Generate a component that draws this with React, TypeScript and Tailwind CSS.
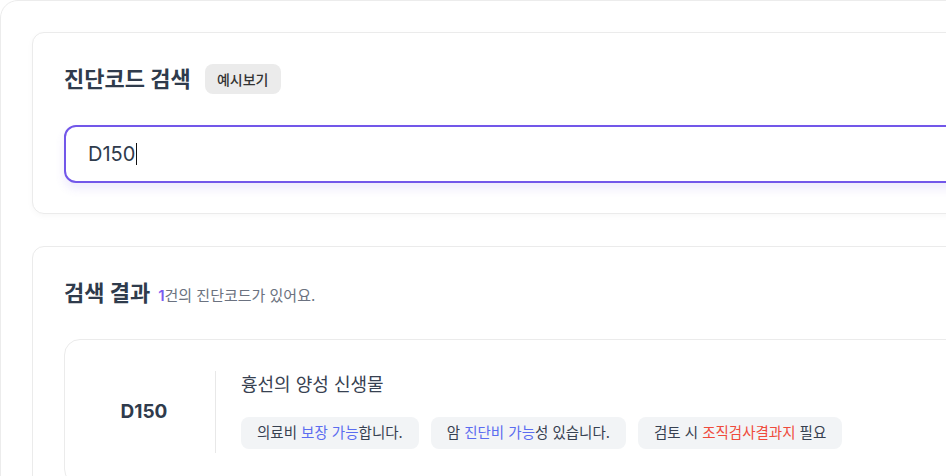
import React from 'react'

const font = { fontFamily: 'Inter, "Noto Sans CJK KR", "Noto Sans", sans-serif' }

function Chip({ children }: { children: React.ReactNode }) {
  return (
    <span className="inline-block h-8 rounded-lg bg-[#f2f4f6] px-4 text-[14.5px] leading-8 text-[#374151] whitespace-nowrap">
      {children}
    </span>
  )
}

export default function App() {
  return (
    <div className="h-[476px] w-[946px] overflow-hidden bg-white" style={font}>
      <div className="w-[1200px] min-h-[600px] rounded-[18px] border border-[#ececec] bg-white p-[31px]">
        {/* Search card */}
        <section className="rounded-xl border border-[#ebebeb] bg-white px-[31px] pt-[31px] pb-[30px] shadow-[0_2px_6px_rgba(0,0,0,0.03)]">
          <div className="flex h-[30px] items-center gap-[14px]">
            <h1 className="text-[22px] leading-[30px] font-bold text-[#2f3b4c]">진단코드 검색</h1>
            <button className="h-[30px] w-[76px] rounded-lg bg-[#ebebeb] text-[14px] font-medium text-[#333]">
              예시보기
            </button>
          </div>
          <div className="mt-[31px] flex h-[58px] items-center rounded-xl border-2 border-[#7257e9] bg-white px-[22px] shadow-[0_6px_10px_rgba(114,87,233,0.12)]">
            <span className="text-[20px] text-[#2f3b4c]">D150</span>
            <span className="ml-px h-[22px] w-px bg-[#111]" />
          </div>
        </section>

        {/* Results card */}
        <section className="mt-8 rounded-xl border border-[#ebebeb] bg-white p-[31px]">
          <div className="flex h-[30px] items-baseline gap-2">
            <h2 className="text-[22px] leading-[30px] font-bold text-[#2f3b4c]">검색 결과</h2>
            <p className="text-[15px] text-[#6b7280]">
              <span className="font-semibold text-[#7c5cf0]">1</span>건의 진단코드가 있어요.
            </p>
          </div>

          <div className="mt-[31px] rounded-2xl border border-[#ebebeb] bg-white py-[31px]">
            <div className="flex">
              <div className="flex w-[150px] items-center justify-center pl-2">
                <span className="text-[19px] font-bold text-[#2f3b4c]">D150</span>
              </div>
              <div className="w-px bg-[#e8e8e8]" />
              <div className="pb-1 pl-[25px]">
                <p className="text-[18px] leading-[28px] text-[#374151]">흉선의 양성 신생물</p>
                <div className="mt-[18px] flex gap-3">
                  <Chip>
                    의료비 <span className="text-[#5b6cf0]">보장 가능</span>합니다.
                  </Chip>
                  <Chip>
                    암 <span className="text-[#5b6cf0]">진단비 가능</span>성 있습니다.
                  </Chip>
                  <Chip>
                    검토 시 <span className="text-[#ef4b3c]">조직검사결과지</span> 필요
                  </Chip>
                </div>
              </div>
            </div>
          </div>
        </section>
      </div>
    </div>
  )
}
